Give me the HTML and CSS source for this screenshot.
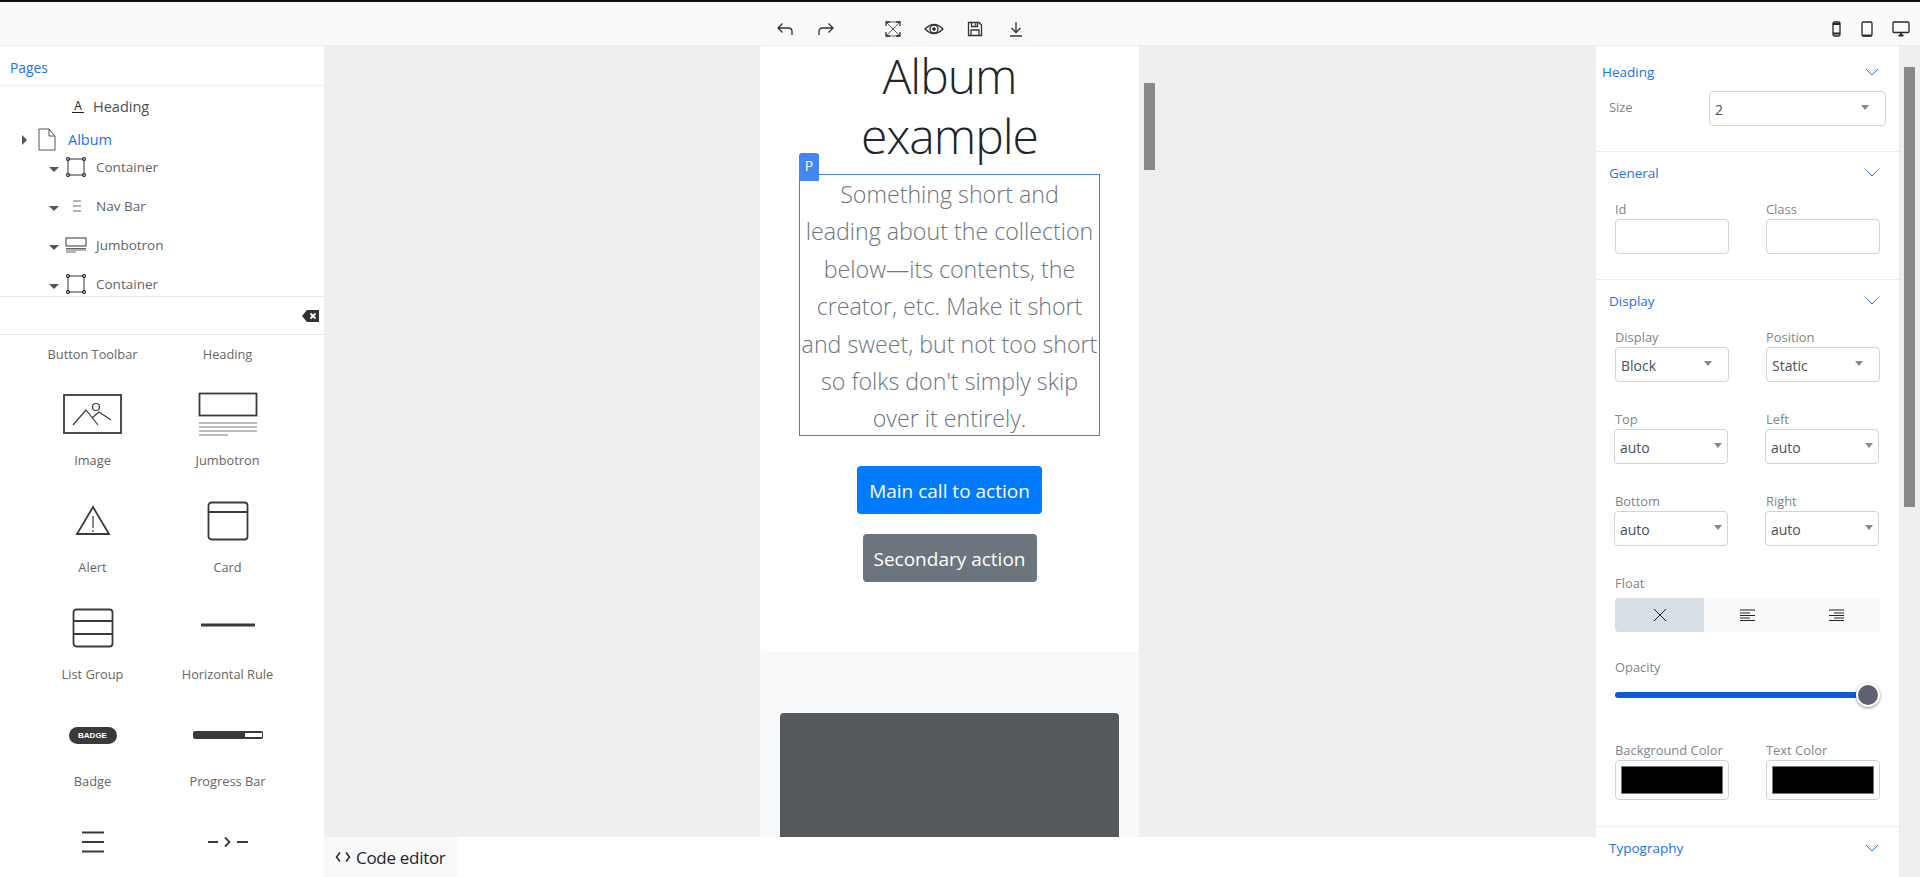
FILE: index.html
```html
<!DOCTYPE html>
<html lang="en">
<head>
<meta charset="utf-8">
<title>Page builder</title>
<link rel="stylesheet" href="styles.css">
</head>
<body>
<div class="app">
  <header class="topbar">
    <div class="tool-group tools-history">
      <button class="tool"><svg width="18" height="16" viewBox="0 0 18 16"><path d="M6.500 2.500 2 7l4.500 4.500M2 7h10.500Q16 7 16 10.500V14"/></svg></button>
      <button class="tool"><svg width="18" height="16" viewBox="0 0 18 16"><path d="M11.500 2.500 16 7l-4.500 4.500M16 7H5.500Q2 7 2 10.500V14"/></svg></button>
    </div>
    <div class="tool-group tools-view">
      <button class="tool"><svg width="18" height="18" viewBox="0 0 18 18"><path d="M2 2l14 14M16 2 2 16M2 2h14M2 16h14" class="thin"/><path d="M2 6V2h4M12 2h4v4M16 12v4h-4M6 16H2v-4"/></svg></button>
      <button class="tool"><svg width="20" height="14" viewBox="0 0 20 14"><path d="M1 7q9-9 18 0q-9 9-18 0z"/><circle cx="10" cy="7" r="4"/><circle cx="10" cy="7" r="1.800" class="solid"/></svg></button>
      <button class="tool"><svg width="16" height="16" viewBox="0 0 16 16"><path d="M2 1.500h10l2.500 2.500v10.500H1.500V1.500zM4.500 1.500v4h6v-4M8.500 2.500v2M4 14.500V9h8v5.500"/></svg></button>
      <button class="tool"><svg width="14" height="16" viewBox="0 0 14 16"><path d="M7 1v10M2.500 7 7 11.500 11.500 7M1 15h12"/></svg></button>
    </div>
    <div class="tool-group tools-device">
      <svg class="device" width="10" height="16" viewBox="0 0 10 16"><rect x="1" y="1" width="7" height="14" rx="1.500"/><path d="M1 3h7M1 12.500h7" class="thick"/></svg>
      <svg class="device" width="12" height="16" viewBox="0 0 12 16"><rect x="1" y="1" width="10" height="14" rx="1.500"/><path d="M1 14.500h10" class="thick"/></svg>
      <svg class="device" width="18" height="16" viewBox="0 0 18 16"><rect x="1" y="1" width="16" height="10.500" rx="1"/><path d="M6.500 14.500h5M9 12v2" class="thick"/></svg>
    </div>
  </header>

  <div class="workspace">
    <aside class="left">
      <div class="pages-head">Pages</div>
      <div class="tree">
        <div class="row row-heading"><span class="glyph-a">A</span><span>Heading</span></div>
        <div class="row row-page">
          <span class="tri-right"></span>
          <svg width="18" height="23" viewBox="0 0 18 23" class="page-icon"><path d="M1 1h10l6 7v14H1zM11 1v7h6"/></svg>
          <span class="page-name">Album</span>
        </div>
        <div class="row row-sub">
          <span class="tri-down"></span>
          <svg class="node-icon" width="22" height="22" viewBox="0 0 22 22"><rect x="3" y="3" width="16" height="16"/><circle cx="3" cy="3" r="1.700"/><circle cx="19" cy="3" r="1.700"/><circle cx="3" cy="19" r="1.700"/><circle cx="19" cy="19" r="1.700"/></svg>
          <span>Container</span>
        </div>
        <div class="row row-sub">
          <span class="tri-down"></span>
          <svg class="node-icon" width="22" height="14" viewBox="0 0 22 14"><path d="M8 2h8M8 7h8M8 12h8" class="gray"/></svg>
          <span>Nav Bar</span>
        </div>
        <div class="row row-sub">
          <span class="tri-down"></span>
          <svg class="node-icon" width="22" height="16" viewBox="0 0 22 16"><rect x="1" y="1" width="20" height="8"/><path d="M1 11.500h20M1 13h20M1 15h10" class="gray"/></svg>
          <span>Jumbotron</span>
        </div>
        <div class="row row-sub">
          <span class="tri-down"></span>
          <svg class="node-icon" width="22" height="22" viewBox="0 0 22 22"><rect x="3" y="3" width="16" height="16"/><circle cx="3" cy="3" r="1.700"/><circle cx="19" cy="3" r="1.700"/><circle cx="3" cy="19" r="1.700"/><circle cx="19" cy="19" r="1.700"/></svg>
          <span>Container</span>
        </div>
      </div>
      <div class="search">
        <svg width="17" height="12" viewBox="0 0 17 12"><path d="M5 0h12v12H5L0 6z" class="solid"/><path d="M8.500 3.500l5 5m0-5-5 5" class="cut"/></svg>
      </div>
      <div class="components">
        <div class="comp"><span>Button Toolbar</span></div>
        <div class="comp"><span>Heading</span></div>
        <div class="comp">
          <div class="comp-icon"><svg width="60" height="40" viewBox="0 0 60 40"><rect x="1" y="1" width="57" height="38" class="w2"/><path d="M10 31 23 16l12 15M29 24l7-6 12 8"/><circle cx="33" cy="13" r="3.500"/></svg></div>
          <span>Image</span>
        </div>
        <div class="comp">
          <div class="comp-icon"><svg width="60" height="44" viewBox="0 0 60 44"><rect x="1.500" y="1.500" width="57" height="22" class="w2"/><path d="M1 31h58M1 35h58M1 39h58M1 43h29" class="lines"/></svg></div>
          <span>Jumbotron</span>
        </div>
        <div class="comp">
          <div class="comp-icon"><svg width="36" height="32" viewBox="0 0 36 32"><path d="M18 2 2 29h32z" class="w2"/><path d="M18 11v12M18 25v2"/></svg></div>
          <span>Alert</span>
        </div>
        <div class="comp">
          <div class="comp-icon"><svg width="42" height="40" viewBox="0 0 42 40"><rect x="1.500" y="1.500" width="39" height="37" rx="3" class="w2"/><path d="M1.500 11h39" class="w2"/></svg></div>
          <span>Card</span>
        </div>
        <div class="comp">
          <div class="comp-icon"><svg width="42" height="40" viewBox="0 0 42 40"><rect x="1.500" y="1.500" width="39" height="37" rx="3" class="w2"/><path d="M1.500 13h39M1.500 26h39" class="w2"/></svg></div>
          <span>List Group</span>
        </div>
        <div class="comp">
          <div class="comp-icon comp-icon-up"><svg width="54" height="4" viewBox="0 0 54 4"><path d="M1 2h52" class="w3"/></svg></div>
          <span>Horizontal Rule</span>
        </div>
        <div class="comp">
          <div class="comp-icon"><span class="badge-art">BADGE</span></div>
          <span>Badge</span>
        </div>
        <div class="comp">
          <div class="comp-icon"><div class="progress-art"><div class="progress-gap"></div></div></div>
          <span>Progress Bar</span>
        </div>
        <div class="comp">
          <div class="comp-icon"><svg width="22" height="22" viewBox="0 0 22 22"><path d="M0 1.500h22M0 11h22M0 20.500h22" class="w15"/></svg></div>
        </div>
        <div class="comp">
          <div class="comp-icon"><svg width="40" height="12" viewBox="0 0 40 12"><path d="M0 6h10M29 6h11" class="w15"/><path d="M17 1.500l4.500 4.500-4.500 4.500" class="w15"/></svg></div>
        </div>
      </div>
    </aside>

    <main class="center">
      <div class="canvas-area">
        <div class="canvas">
          <section class="hero">
            <h1 class="hero-title">Album example</h1>
            <div class="lead-wrap">
              <span class="tag">P</span>
              <p class="lead">Something short and<br>leading about the collection<br>below—its contents, the<br>creator, etc. Make it short<br>and sweet, but not too short<br>so folks don't simply skip<br>over it entirely.</p>
            </div>
            <a class="btn btn-primary">Main call to action</a>
            <a class="btn btn-secondary">Secondary action</a>
          </section>
          <section class="album">
            <div class="album-card"></div>
          </section>
        </div>
        <div class="canvas-scroll"><div class="canvas-thumb"></div></div>
      </div>
      <div class="bottombar">
        <div class="code-tab">
          <svg width="16" height="12" viewBox="0 0 16 12"><path d="M5 1.500 1.500 6 5 10.500M11 1.500 14.500 6 11 10.500"/></svg>
          <span>Code editor</span>
        </div>
      </div>
    </main>

    <aside class="right">
      <section class="group group-heading">
        <div class="group-head head-flush"><span>Heading</span><svg class="chev" width="14" height="8" viewBox="0 0 14 8"><path d="M1 1l6 6 6-6"/></svg></div>
        <div class="size-row">
          <label class="lbl">Size</label>
          <div class="select select-size">2<i class="caret"></i></div>
        </div>
      </section>
      <section class="group group-general">
        <div class="group-head"><span>General</span><svg class="chev" width="14" height="8" viewBox="0 0 14 8"><path d="M1 1l6 6 6-6"/></svg></div>
        <div class="fields fields-first">
          <div class="field"><label class="lbl">Id</label><div class="input"></div></div>
          <div class="field"><label class="lbl">Class</label><div class="input"></div></div>
        </div>
      </section>
      <section class="group group-display">
        <div class="group-head"><span>Display</span><svg class="chev" width="14" height="8" viewBox="0 0 14 8"><path d="M1 1l6 6 6-6"/></svg></div>
        <div class="fields fields-display">
          <div class="field"><label class="lbl">Display</label><div class="select">Block<i class="caret caret-in"></i></div></div>
          <div class="field"><label class="lbl">Position</label><div class="select">Static<i class="caret caret-in"></i></div></div>
        </div>
        <div class="fields fields-offset">
          <div class="field"><label class="lbl lbl-out">Top</label><div class="select">auto<i class="caret"></i></div></div>
          <div class="field"><label class="lbl lbl-out">Left</label><div class="select">auto<i class="caret"></i></div></div>
        </div>
        <div class="fields fields-offset">
          <div class="field"><label class="lbl lbl-out">Bottom</label><div class="select">auto<i class="caret"></i></div></div>
          <div class="field"><label class="lbl lbl-out">Right</label><div class="select">auto<i class="caret"></i></div></div>
        </div>
        <div class="float-block">
          <label class="lbl">Float</label>
          <div class="segmented">
            <div class="seg seg-on"><svg width="14" height="14" viewBox="0 0 14 14"><path d="M1 1l12 12M13 1 1 13"/></svg></div>
            <div class="seg"><svg width="16" height="12" viewBox="0 0 16 12"><path d="M0 1h15M0 4h10M0 6.500h15M0 9h10M0 11.500h15"/></svg></div>
            <div class="seg"><svg width="16" height="12" viewBox="0 0 16 12"><path d="M1 1h15M6 4h10M1 6.500h15M6 9h10M1 11.500h15"/></svg></div>
          </div>
        </div>
        <div class="opacity-block">
          <label class="lbl">Opacity</label>
          <div class="slider"><div class="slider-track"></div><div class="slider-thumb"></div></div>
        </div>
        <div class="fields fields-color">
          <div class="field"><label class="lbl">Background Color</label><div class="swatch"><div class="swatch-fill"></div></div></div>
          <div class="field"><label class="lbl">Text Color</label><div class="swatch"><div class="swatch-fill"></div></div></div>
        </div>
      </section>
      <section class="group group-typo">
        <div class="group-head"><span>Typography</span><svg class="chev" width="14" height="8" viewBox="0 0 14 8"><path d="M1 1l6 6 6-6"/></svg></div>
      </section>
    </aside>

    <div class="page-scroll"><div class="page-thumb"></div></div>
  </div>
</div>
</body>
</html>
```

FILE: styles.css
```css
* { box-sizing: border-box; }
html, body { margin: 0; height: 100%; overflow: hidden; }
body { font-family: "Open Sans", "Noto Sans", sans-serif; font-size: 13px; color: #495057; background: #fff; }
svg { display: block; fill: none; stroke: #333; stroke-width: 1.3; flex: none; }
.solid { fill: #333; stroke: none; }

.app { height: 877px; display: flex; flex-direction: column; border-top: 2px solid #111; }

.topbar { height: 44px; flex: none; position: relative; z-index: 1; display: grid; grid-template-columns: 764px auto auto 1fr auto; background: #fafafa; border-bottom: 1px solid #eee; }
.tool-group { display: flex; align-items: center; }
.tools-view { margin-left: 26px; grid-column: 3; }
.tools-history { grid-column: 2; }
.tools-device { grid-column: 5; padding: 11px 10px 0 0; }
.tool { width: 41px; height: 43px; padding: 11px 0 0; border: 0; background: #f8f9fa; display: flex; align-items: center; justify-content: center; }
.device { stroke: #1f2933; margin-left: 19px; }
.device .thick { stroke-width: 1.8; }
.tool .thin { stroke-width: .8; }
.tool .solid { stroke: none; fill: #222; }

.workspace { flex: 1; min-height: 0; display: flex; background: #eee; }

.left { width: 324px; flex: none; background: #fff; display: flex; flex-direction: column; overflow: hidden; }
.pages-head { height: 40px; flex: none; display: flex; align-items: center; padding: 3px 0 0 10px; color: #1a73e8; font-size: 13.800px; border-bottom: 1px solid #eee; }
.tree { height: 211px; flex: none; overflow: hidden; border-bottom: 1px solid #e9e9e9; }
.row { display: flex; align-items: center; }
.row-heading { height: 40px; padding-left: 72px; gap: 9px; color: #495057; font-size: 14.500px; }
.glyph-a { width: 12px; color: #222; font-size: 12px; line-height: 12px; border-bottom: 1.500px solid #222; text-align: center; }
.row-page { height: 27px; padding-left: 22px; color: #1a73e8; font-size: 14.500px; font-weight: 500; margin-bottom: -6px; }
.page-name { margin-top: -1px; }
.tri-right { width: 0; height: 0; border-left: 5px solid #555; border-top: 5px solid transparent; border-bottom: 5px solid transparent; margin-right: 11px; }
.page-icon { stroke: #555; stroke-width: 1; margin-right: 12px; }
.row-sub { height: 39px; padding-left: 49px; color: #5f6368; font-size: 13.500px; }
.tri-down { width: 0; height: 0; border-top: 5px solid #555; border-left: 5px solid transparent; border-right: 5px solid transparent; margin: 5px 6px 0 0; }
.node-icon { stroke: #333; stroke-width: 1; margin-right: 9px; }
.node-icon .gray { stroke: #666; }
.search { height: 38px; flex: none; display: flex; align-items: center; justify-content: flex-end; padding-right: 5px; border-bottom: 1px solid #e9e9e9; }
.search .cut { stroke: #fff; stroke-width: 1.800; }

.components { flex: 1; min-height: 0; overflow: hidden; display: grid; grid-template-columns: 135px 135px; grid-template-rows: 35px; grid-auto-rows: 107px; padding: 9px 0 0 25px; }
.comp { display: flex; flex-direction: column; align-items: center; color: #666; font-size: 12.800px; line-height: 20px; text-align: center; }
.comp-icon { height: 71px; width: 100%; display: flex; align-items: center; justify-content: center; padding-bottom: 1px; }
.comp-icon-up { padding-bottom: 8px; }
.comp svg { stroke: #3a3a3a; stroke-width: 1.200; }
.comp .w2 { stroke-width: 1.800; }
.comp .w3 { stroke-width: 3; stroke-linecap: round; }
.comp .w15 { stroke-width: 1.800; }
.comp .lines { stroke: #777; stroke-width: 1; }
.badge-art { width: 48px; height: 17px; border-radius: 9px; background: #3a3a3a; color: #fff; font: 700 8px/17px "Liberation Sans", sans-serif; text-align: center; }
.progress-art { width: 70px; height: 8px; border-radius: 2px; background: #3a3a3a; display: flex; justify-content: flex-end; align-items: center; padding-right: 1px; }
.progress-gap { width: 17px; height: 4px; background: #fff; }

.center { flex: 1; min-width: 0; display: flex; flex-direction: column; }
.canvas-area { flex: 1; min-height: 0; margin-top: -5px; padding-top: 5px; overflow: hidden; display: flex; justify-content: center; position: relative; }
.canvas { width: 379px; margin-right: 21px; background: #f8f9fa; }
.hero { height: 606px; background: #fff; border-radius: 0 0 5px 5px; display: flex; flex-direction: column; align-items: center; padding: 0 39px; }
.hero-title { margin: 0; font-weight: 300; font-size: 48px; letter-spacing: -1px; line-height: 60px; color: #212529; text-align: center; width: 100%; }
.lead-wrap { position: relative; width: 301px; margin-top: 8px; border: 1px solid #4a7fc9; }
.lead { margin: 0; height: 260px; padding-top: 1px; font-weight: 300; font-size: 23.200px; line-height: 37.400px; color: #6c757d; text-align: center; white-space: nowrap; }
.tag { position: absolute; left: -1px; top: -22px; width: 20px; height: 28px; background: #4285f4; color: #fff; border-radius: 3px 3px 0 0; font-size: 14px; line-height: 26px; text-align: center; }
.btn { display: block; color: #fff; font-size: 19px; line-height: 51px; height: 48px; border-radius: 4px; text-align: center; white-space: nowrap; overflow: hidden; }
.btn-primary { width: 185px; margin-top: 30px; background: #007bff; }
.btn-secondary { width: 174px; margin-top: 20px; background: #6c757d; }
.album { height: 300px; background: #f8f9fa; padding: 61px 20px 0; }
.album-card { height: 300px; background: #55595c; border-radius: 4px; }
.canvas-scroll { position: absolute; left: 820px; top: 42px; width: 11px; }
.canvas-thumb { height: 87px; background: #888; }

.bottombar { height: 40px; flex: none; background: #fff; display: flex; }
.code-tab { width: 134px; background: #f8f9fa; display: flex; align-items: center; gap: 5px; padding-left: 11px; color: #212529; font-size: 17px; letter-spacing: -.3px; }
.code-tab svg { stroke: #222; stroke-width: 1.500; }

.right { width: 303px; flex: none; background: #fff; overflow: hidden; }
.group { border-bottom: 1px solid #eee; padding: 0 13px; }
.group-head { display: flex; align-items: center; justify-content: space-between; color: #1a73e8; font-size: 13.500px; font-weight: 500; height: 20px; }
.group-head .chev { stroke: #1a73e8; stroke-width: 1; margin-right: 7px; }
.head-flush { margin-left: -7px; }
.group-heading { height: 106px; padding-top: 16px; }
.size-row { display: flex; align-items: flex-start; margin-top: 9px; justify-content: space-between; }
.size-row .lbl { margin-top: 7px; }
.select-size { width: 177px; }
.lbl { display: block; color: #80858a; font-size: 12.900px; line-height: 18px; white-space: nowrap; }
.lbl-out { margin-left: 1px; }
.group-general { height: 128px; padding-top: 11px; }
.group-display { height: 547px; padding-top: 11px; }
.group-typo { border: 0; padding-top: 11px; }
.fields { display: grid; grid-template-columns: 114px 114px; column-gap: 37px; padding-left: 6px; }
.fields-first { margin-top: 17px; }
.fields-display { margin-top: 17px; }
.field .lbl { margin-bottom: 1px; }
.fields-offset { margin-top: 28px; margin-left: -1px; }
.input { height: 35px; border: 1px solid #ced4da; border-radius: 4px; background: #fff; }
.select { position: relative; height: 35px; border: 1px solid #ced4da; border-radius: 4px; background: #fff; padding-left: 5px; color: #495057; font-size: 14px; line-height: 35px; }
.caret { position: absolute; right: 5px; top: 13px; width: 0; height: 0; border-top: 5px solid #888; border-left: 4.500px solid transparent; border-right: 4.500px solid transparent; }
.select-size .caret { right: 16px; }
.caret-in { right: 16px; top: 13px; }
.float-block { margin: 28px 0 0 6px; }
.segmented { margin-top: 6px; height: 34px; width: 265px; display: grid; grid-template-columns: 89px 88px 88px; background: #f8f9fa; border-radius: 4px; overflow: hidden; }
.seg { display: flex; align-items: center; justify-content: center; }
.seg svg { stroke: #222; stroke-width: 1; }
.seg-on { background: #d8dee6; }
.opacity-block { margin: 26px 0 0 6px; }
.slider { display: flex; align-items: center; width: 265px; margin-top: 7px; }
.slider-track { flex: 1; height: 6px; background: #0b5ed7; border-radius: 3px; margin-right: -4px; }
.slider-thumb { width: 24px; height: 24px; border-radius: 50%; background: #5f6072; border: 2px solid #fff; box-shadow: 0 1px 3px rgba(0,0,0,.45); position: relative; }
.fields-color { margin-top: 34px; }
.swatch { height: 40px; border: 1px solid #ced4da; border-radius: 4px; padding: 5px; }
.swatch-fill { height: 100%; background: #000; border: 1px solid #777; }

.page-scroll { width: 21px; flex: none; padding: 21px 5px 0; }
.page-thumb { width: 11px; height: 440px; background: #888; }
```
